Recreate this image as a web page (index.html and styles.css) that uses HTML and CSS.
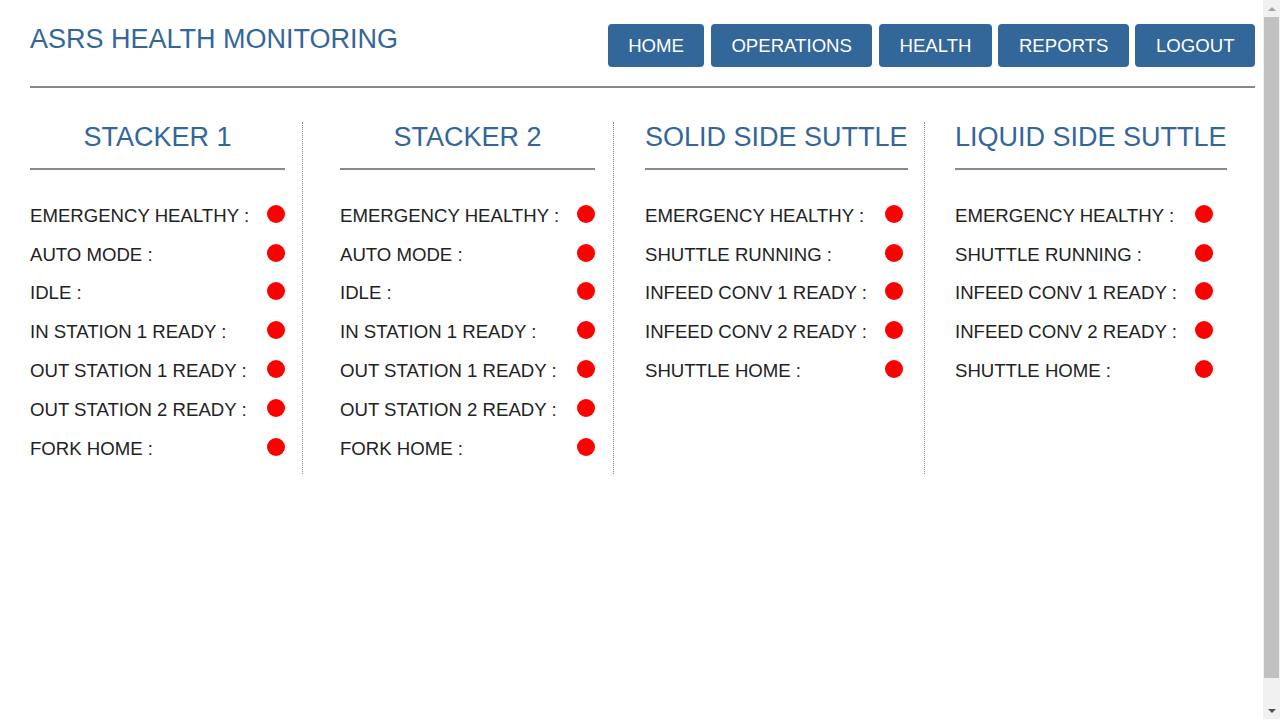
FILE: index.html
```html
<!DOCTYPE html>
<html lang="en">
<head>
<meta charset="utf-8">
<title>ASRS Health Monitoring</title>
<link rel="stylesheet" href="styles.css">
</head>
<body>
<div class="page">
  <header class="topbar">
    <h1 class="title">ASRS HEALTH MONITORING</h1>
    <nav class="nav">
      <a class="btn" href="#">HOME</a>
      <a class="btn" href="#">OPERATIONS</a>
      <a class="btn" href="#">HEALTH</a>
      <a class="btn" href="#">REPORTS</a>
      <a class="btn" href="#">LOGOUT</a>
    </nav>
  </header>
  <hr class="rule">
  <main class="panels">
    <section class="panel panel-1">
      <div class="panel-inner">
        <h2 class="panel-title">STACKER 1</h2>
        <div class="status">
          <span class="label">EMERGENCY HEALTHY :</span><span class="dot"></span>
          <span class="label">AUTO MODE :</span><span class="dot"></span>
          <span class="label">IDLE :</span><span class="dot"></span>
          <span class="label">IN STATION 1 READY :</span><span class="dot"></span>
          <span class="label">OUT STATION 1 READY :</span><span class="dot"></span>
          <span class="label">OUT STATION 2 READY :</span><span class="dot"></span>
          <span class="label">FORK HOME :</span><span class="dot"></span>
        </div>
      </div>
    </section>
    <section class="panel panel-2">
      <div class="panel-inner">
        <h2 class="panel-title">STACKER 2</h2>
        <div class="status">
          <span class="label">EMERGENCY HEALTHY :</span><span class="dot"></span>
          <span class="label">AUTO MODE :</span><span class="dot"></span>
          <span class="label">IDLE :</span><span class="dot"></span>
          <span class="label">IN STATION 1 READY :</span><span class="dot"></span>
          <span class="label">OUT STATION 1 READY :</span><span class="dot"></span>
          <span class="label">OUT STATION 2 READY :</span><span class="dot"></span>
          <span class="label">FORK HOME :</span><span class="dot"></span>
        </div>
      </div>
    </section>
    <section class="panel panel-3">
      <div class="panel-inner">
        <h2 class="panel-title">SOLID SIDE SUTTLE</h2>
        <div class="status">
          <span class="label">EMERGENCY HEALTHY :</span><span class="dot"></span>
          <span class="label">SHUTTLE RUNNING :</span><span class="dot"></span>
          <span class="label">INFEED CONV 1 READY :</span><span class="dot"></span>
          <span class="label">INFEED CONV 2 READY :</span><span class="dot"></span>
          <span class="label">SHUTTLE HOME :</span><span class="dot"></span>
        </div>
      </div>
    </section>
    <section class="panel panel-4">
      <div class="panel-inner">
        <h2 class="panel-title">LIQUID SIDE SUTTLE</h2>
        <div class="status">
          <span class="label">EMERGENCY HEALTHY :</span><span class="dot"></span>
          <span class="label">SHUTTLE RUNNING :</span><span class="dot"></span>
          <span class="label">INFEED CONV 1 READY :</span><span class="dot"></span>
          <span class="label">INFEED CONV 2 READY :</span><span class="dot"></span>
          <span class="label">SHUTTLE HOME :</span><span class="dot"></span>
        </div>
      </div>
    </section>
  </main>
</div>
<div class="scrollbar" aria-hidden="true">
  <span class="sb-arrow sb-up"></span>
  <span class="sb-thumb"></span>
  <span class="sb-arrow sb-down"></span>
</div>
</body>
</html>
```
FILE: styles.css
```css
html, body {
  margin: 0;
  padding: 0;
  background: #ffffff;
}

body {
  font-family: "Liberation Sans", Arial, sans-serif;
  color: #222222;
}

.page {
  min-height: 719px;
  box-sizing: border-box;
  padding: 24px 25px 0 30px;
}

.topbar {
  display: flex;
  justify-content: space-between;
  align-items: flex-start;
}

.title {
  margin: 0;
  font-size: 27px;
  font-weight: normal;
  line-height: 30px;
  color: #336699;
}

.nav {
  display: flex;
  gap: 6.5px;
}

.btn {
  display: block;
  background: #336699;
  color: #ffffff;
  text-decoration: none;
  font-size: 18.6px;
  line-height: 21px;
  padding: 10.5px 20.5px 11.5px;
  border-radius: 4px;
}

.rule {
  margin: 19px 0 0 0;
  border: 0;
  height: 2px;
  background: #888888;
}

.panels {
  display: grid;
  grid-template-columns: 273px 311px 311px 1fr;
  margin-top: 34px;
}

.panel {
  box-sizing: border-box;
  padding-bottom: 6px;
  border-right: 1px dotted #888888;
}

.panel-4 {
  border-right: 0;
}

.panel-2 { padding-left: 37px; }
.panel-3 { padding-left: 31px; }
.panel-4 { padding-left: 30px; }

.panel-inner {
  width: max-content;
}

.panel-title {
  margin: 0;
  font-size: 27px;
  font-weight: normal;
  line-height: 30px;
  color: #336699;
  text-align: center;
  padding-bottom: 16px;
  border-bottom: 2px solid #8a8a8a;
}

.status {
  display: grid;
  grid-template-columns: max-content 18px;
  grid-auto-rows: 38.8px;
  column-gap: 18px;
  align-items: center;
  margin-top: 26px;
  font-size: 18.6px;
  line-height: 21px;
}

.label {
  color: #222222;
}

.dot {
  width: 18px;
  height: 18px;
  border-radius: 50%;
  background: #ff0000;
  margin-top: -3px;
}

/* browser scrollbar as seen in the reference */
.scrollbar {
  position: fixed;
  top: 0;
  right: 0;
  bottom: 0;
  width: 17px;
  background: #f1f1f1;
  display: flex;
  flex-direction: column;
  align-items: center;
}

.sb-arrow {
  height: 17px;
  flex: none;
  display: flex;
  align-items: center;
  justify-content: center;
}

.sb-up::before {
  content: "";
  border-left: 4px solid transparent;
  border-right: 4px solid transparent;
  border-bottom: 4px solid #a3a3a3;
}

.sb-down::before {
  content: "";
  border-left: 4px solid transparent;
  border-right: 4px solid transparent;
  border-top: 4px solid #505050;
}

.sb-thumb {
  flex: 1;
  width: 15px;
  margin: 0 0 24px 0;
  background: #c1c1c1;
}
```
